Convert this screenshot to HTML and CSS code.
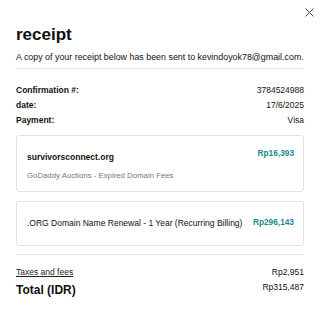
FILE: index.html
```html
<!DOCTYPE html>
<html>
<head>
<meta charset="utf-8">
<link rel="stylesheet" href="styles.css">
</head>
<body>
<div class="modal">
  <button class="close" aria-label="Close">
    <svg width="9" height="9" viewBox="0 0 9 9"><path d="M0.5 0.5L8.5 8.5M8.5 0.5L0.5 8.5" stroke="#444" stroke-width="1" fill="none"/></svg>
  </button>
  <h1 class="title">receipt</h1>
  <p class="sub">A copy of your receipt below has been sent to kevindoyok78@gmail.com.</p>
  <div class="divider"></div>
  <div class="meta">
    <div class="row"><span class="label">Confirmation #:</span><span>3784524988</span></div>
    <div class="row"><span class="label">date:</span><span>17/6/2025</span></div>
    <div class="row"><span class="label">Payment:</span><span>Visa</span></div>
  </div>
  <div class="card card1">
    <div class="card-main">
      <div class="item-name">survivorsconnect.org</div>
      <div class="item-desc">GoDaddy Auctions - Expired Domain Fees</div>
    </div>
    <div class="price">Rp16,393</div>
  </div>
  <div class="card card2">
    <div class="card-main">
      <div class="item-name plain">.ORG Domain Name Renewal - 1 Year (Recurring Billing)</div>
    </div>
    <div class="price">Rp296,143</div>
  </div>
  <div class="divider bottom"></div>
  <div class="row taxes"><span class="link">Taxes and fees</span><span>Rp2,951</span></div>
  <div class="row total"><span class="total-label">Total (IDR)</span><span class="total-amt">Rp315,487</span></div>
</div>
</body>
</html>
```
FILE: styles.css
```css
* { box-sizing: border-box; }
body {
  margin: 0;
  background: #fff;
  font-family: "Liberation Sans", Arial, sans-serif;
  color: #111;
}
.modal {
  position: relative;
  width: 320px;
  height: 320px;
  padding: 23px 16px 0 16px;
}
.close {
  position: absolute;
  top: 8px;
  right: 6px;
  width: 9px;
  height: 9px;
  padding: 0;
  border: 0;
  background: none;
  display: flex;
}
.title {
  margin: 0;
  font-size: 17px;
  line-height: 24px;
  font-weight: 700;
  color: #111;
}
.sub {
  margin: 5px 0 0 0;
  font-size: 8.9px;
  line-height: 10px;
  color: #111;
  white-space: nowrap;
}
.divider {
  height: 1px;
  background: #e4e4e4;
  margin-top: 6px;
  width: 288px;
}
.meta {
  margin-top: 16px;
  display: flex;
  flex-direction: column;
  gap: 5px;
}
.row {
  display: flex;
  justify-content: space-between;
  width: 288px;
  font-size: 8.5px;
  line-height: 10px;
  color: #111;
}
.label { font-weight: 700; }
.card {
  width: 288px;
  border: 1px solid #e2e2e2;
  border-radius: 3px;
  display: flex;
  justify-content: space-between;
  padding: 0 9px 0 10px;
}
.card1 {
  margin-top: 10px;
  height: 57px;
  padding-top: 12px;
}
.card2 {
  margin-top: 9px;
  height: 45px;
  padding-top: 15px;
}
.item-name {
  font-size: 8.5px;
  line-height: 10px;
  font-weight: 700;
  color: #111;
  margin-top: 4px;
  white-space: nowrap;
}
.item-name.plain { font-weight: 400; margin-top: 1px; }
.item-desc {
  margin-top: 9px;
  font-size: 7.8px;
  line-height: 10px;
  color: #777;
}
.price {
  font-size: 8.3px;
  line-height: 10px;
  font-weight: 700;
  color: #1c8a8a;
  white-space: nowrap;
}
.divider.bottom { margin-top: 8px; }
.taxes { margin-top: 12px; }
.link { text-decoration: underline; color: #222; }
.total {
  margin-top: 6px;
  align-items: flex-start;
}
.total-label {
  font-size: 12px;
  line-height: 14px;
  font-weight: 700;
}
.total-amt { margin-top: -1px; }
```
